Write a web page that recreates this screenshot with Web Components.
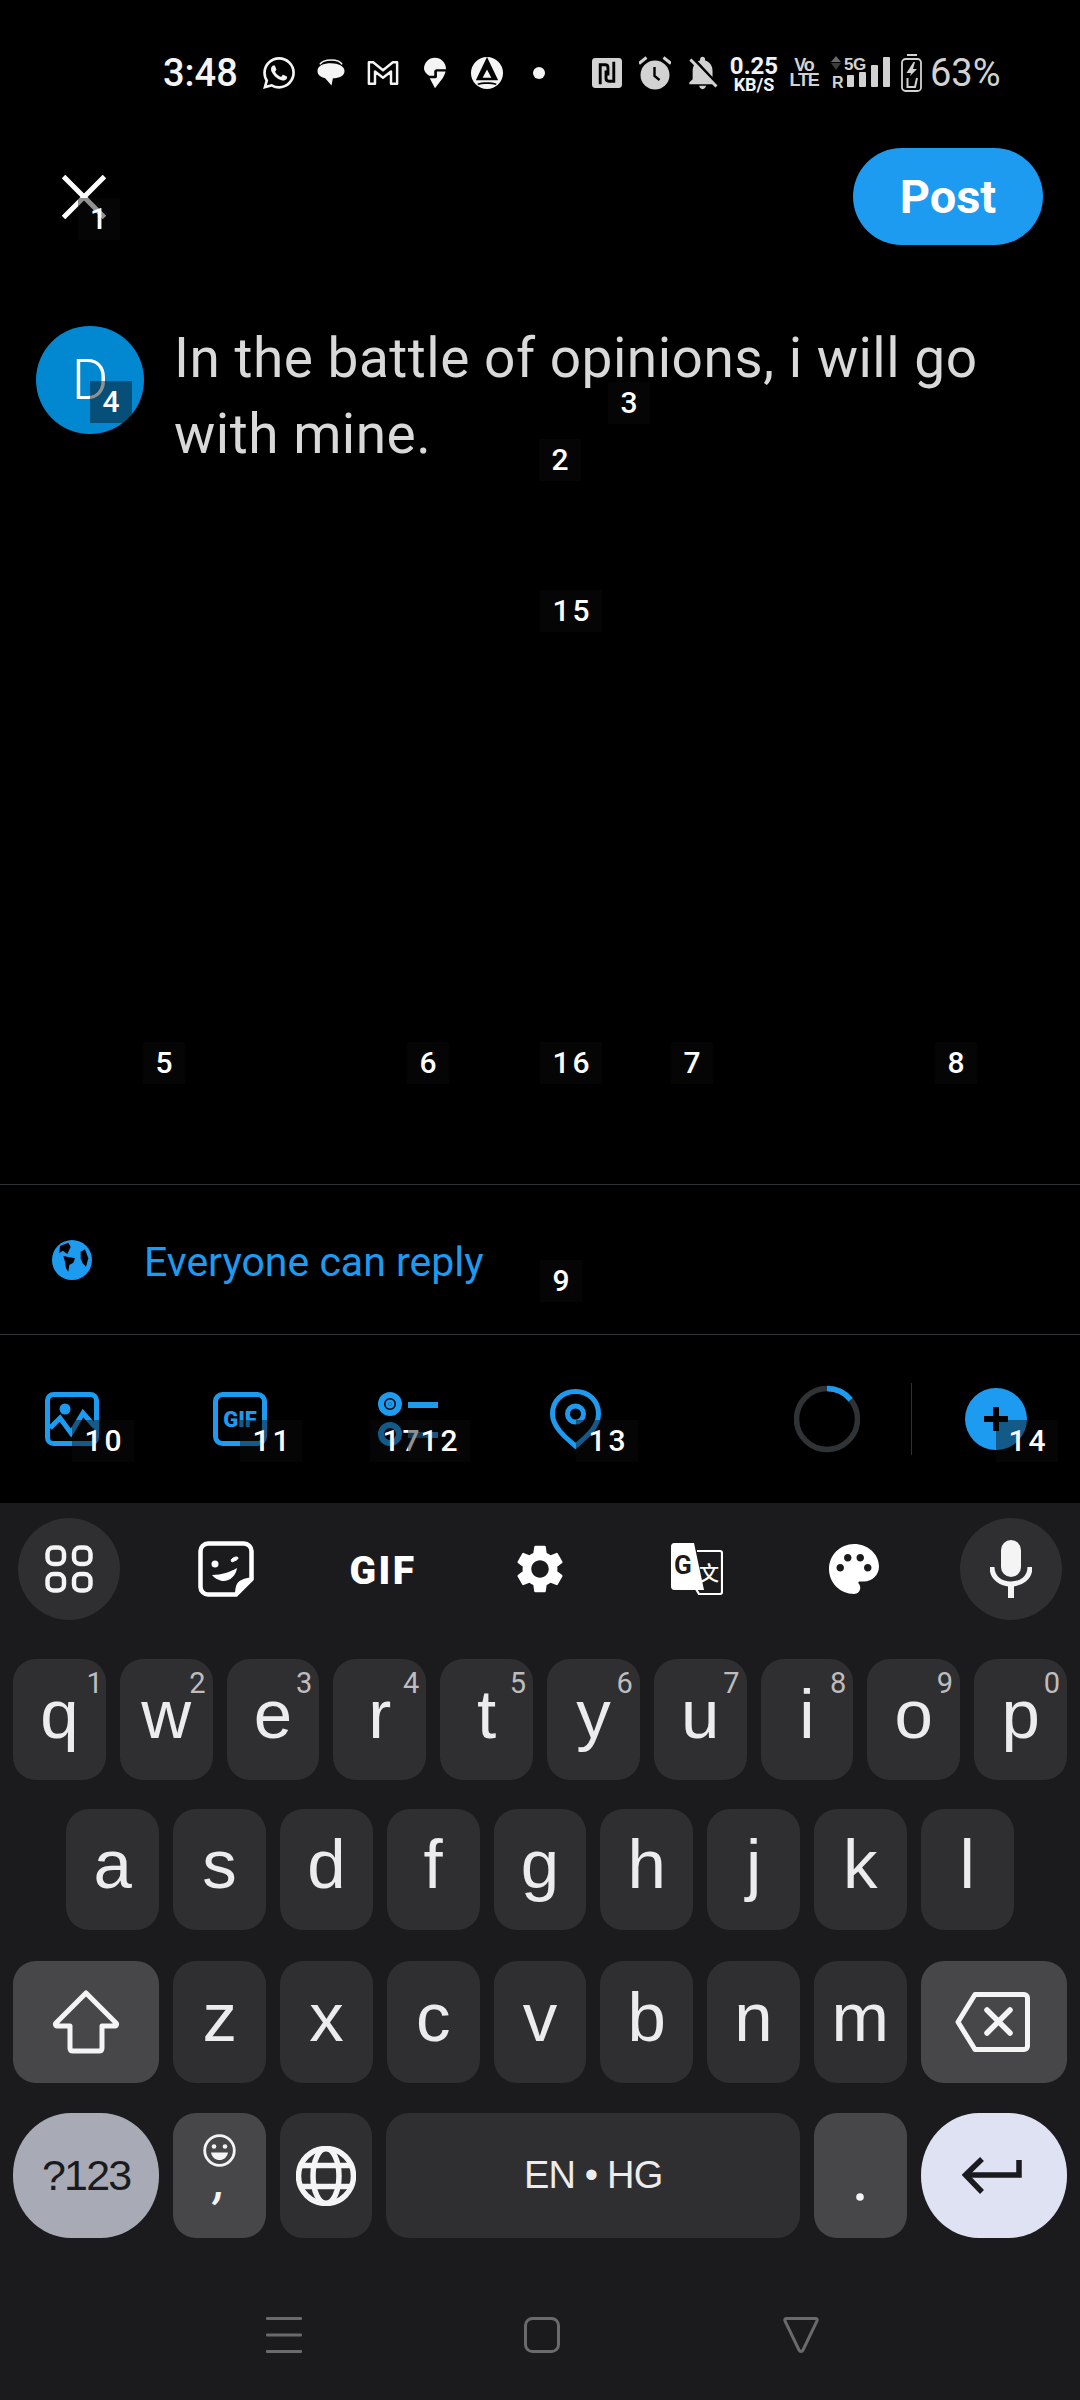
<!DOCTYPE html>
<html lang="en"><head><meta charset="utf-8"><title>Compose</title>
<style>
html,body{margin:0;padding:0;background:#000;}
body{width:1080px;height:2400px;overflow:hidden;font-family:Roboto,"Noto Sans",sans-serif;}
svg{display:block;}
</style></head>
<body>
<x-app>
  <x-status-bar>
    <span style="margin-left:163px;width:74px;font:500 38px Roboto;color:#f4f4f4;white-space:nowrap">3:48</span>
    <svg style="margin-left:26px" width="32" height="32" viewBox="0 0 24 24" fill="#f4f4f4"><path d="M17.472 14.382c-.297-.149-1.758-.867-2.03-.967-.273-.099-.471-.148-.67.15-.197.297-.767.966-.94 1.164-.173.199-.347.223-.644.075-.297-.15-1.255-.463-2.39-1.475-.883-.788-1.48-1.761-1.653-2.059-.173-.297-.018-.458.13-.606.134-.133.298-.347.446-.52.149-.174.198-.298.298-.497.099-.198.05-.371-.025-.52-.075-.149-.669-1.612-.916-2.207-.242-.579-.487-.5-.669-.51-.173-.008-.371-.01-.57-.01-.198 0-.52.074-.792.372-.272.297-1.04 1.016-1.04 2.479 0 1.462 1.065 2.875 1.213 3.074.149.198 2.096 3.2 5.077 4.487.709.306 1.262.489 1.694.625.712.227 1.36.195 1.871.118.571-.085 1.758-.719 2.006-1.413.248-.694.248-1.289.173-1.413-.074-.124-.272-.198-.57-.347m-5.421 7.403h-.004a9.87 9.87 0 01-5.031-1.378l-.361-.214-3.741.982.998-3.648-.235-.374a9.86 9.86 0 01-1.51-5.26c.001-5.45 4.436-9.884 9.888-9.884 2.64 0 5.122 1.03 6.988 2.898a9.825 9.825 0 012.893 6.994c-.003 5.45-4.437 9.884-9.885 9.884m8.413-18.297A11.815 11.815 0 0012.05 0C5.495 0 .16 5.335.157 11.892c0 2.096.547 4.142 1.588 5.945L.057 24l6.305-1.654a11.882 11.882 0 005.683 1.448h.005c6.554 0 11.89-5.335 11.893-11.893a11.821 11.821 0 00-3.48-8.413z"/></svg>
    <svg style="margin-left:22px" width="28" height="28" viewBox="0 0 29 29" fill="#f4f4f4"><path d="M14.500 4.500C7 4.500 .5 7 .5 12.500c0 4 3.500 6.500 8 7.500l6.500 7.500 1.500-7.500c6.500 0 12-2.500 12-7.500S22 4.500 14.500 4.500z"/><path d="M3 5.500C5 2 10 1 15 1s9 1 11 4.500" fill="none" stroke="#f4f4f4" stroke-width="1.600"/></svg>
    <svg style="margin-left:22px" width="32" height="26" viewBox="0 0 34 27"><path d="M2 2h4.500L17 10.500 27.500 2H32v23h-6.500V12L17 18.500 8.500 12v13H2z" fill="none" stroke="#f4f4f4" stroke-width="2.600" stroke-linejoin="round"/></svg>
    <svg style="margin-left:25px" width="22" height="32" viewBox="0 0 23 32" fill="#f4f4f4"><path d="M11.500 0C17.500 0 23 5 23 11.500v.5h-9.500c-1.800 0-2.800 1-2.800 2.500V19H5.500C2.500 17 0 14 0 11.500 0 5 5 0 11.500 0z"/><path d="M6 21.500h6c1 0 1.500-.5 1.500-1.500v-5.500H22.500c-.5 2.500-1.500 4.500-3 7L11.500 32z"/></svg>
    <svg style="margin-left:25px" width="32" height="32" viewBox="0 0 33 33"><circle cx="16.500" cy="16.500" r="16.500" fill="#f4f4f4"/><path d="M16.500 0L5 24h23z" fill="#000"/><path d="M16.500 13l-4.500 8.500h9z" fill="#f4f4f4"/><path d="M6.500 27.500c5-2 15-2 20 0l-1 1.500c-5-1.500-13-1.500-18 0z" fill="#000"/></svg>
    <svg style="margin-left:30px" width="12" height="12" viewBox="0 0 12 12"><circle cx="6" cy="6" r="6" fill="#f4f4f4"/></svg>
    <svg style="margin-left:47px" width="30" height="30" viewBox="0 0 31 31"><rect width="31" height="31" rx="3.500" fill="#d2d2d2"/><path d="M8.500 27V7h5c2 0 3 1 3 3v8M22.500 4v20h-5c-2 0-3-1-3-3v-8" fill="none" stroke="#000" stroke-width="3"/></svg>
    <svg style="margin-left:17px" width="32" height="34" viewBox="0 0 32 34" fill="#d2d2d2"><circle cx="16" cy="19" r="14.500"/><path d="M0 7.500L7.500 1.500M24.500 1.500L32 7.500" stroke="#d2d2d2" stroke-width="3"/><path d="M15.500 11v9l5 4" fill="none" stroke="#000" stroke-width="2.400"/></svg>
    <svg style="margin-left:17px" width="30" height="34" viewBox="3.500 2 17.500 20.500" fill="#d2d2d2"><path d="M20 18.690L7.840 6.140 5.270 3.490 4 4.760l2.800 2.800v.01c-.52.99-.8 2.160-.8 3.420v5l-2 2v1h13.730l2 2L21 19.720l-1-1.030zM12 22c1.110 0 2-.89 2-2h-4c0 1.110.89 2 2 2zm6-7.320V11c0-3.080-1.640-5.640-4.500-6.320V4c0-.83-.67-1.500-1.500-1.500s-1.500.67-1.500 1.500v.68c-.15.03-.29.08-.42.12-.1.03-.2.07-.3.11h-.01c-.2.08-.4.17-.59.27-.01 0-.01 0-.02.01L18 14.680z"/></svg>
    <span style="margin-left:12px;width:48px;display:flex;flex-direction:column;align-items:center;color:#f2f2f2;font:700 24px/21px Roboto;white-space:nowrap;margin-top:1px"><span>0.25</span><span style="font:700 18px/15px Roboto">KB/S</span></span>
    <span style="margin-left:15px;width:22px;display:flex;flex-direction:column;align-items:center;color:#d2d2d2;font:700 18px/15px 'Liberation Sans';letter-spacing:-1.200px;white-space:nowrap"><span>Vo</span><span>LTE</span></span>
    <svg style="margin-left:16px" width="59" height="34" viewBox="0 0 59 34" fill="#d2d2d2"><path d="M5 0L10 6H0z" fill="#6a6a6a"/><path d="M0 7h10L5 14z" fill="#3c3c3c"/><text x="1" y="32" font-family="Liberation Sans" font-weight="700" font-size="16">R</text><text x="13" y="14" font-family="Liberation Sans" font-weight="700" font-size="17" letter-spacing="-.5">5G</text><rect x="16" y="19" width="7" height="12" rx="1"/><rect x="28" y="16" width="7" height="15" rx="1"/><rect x="40" y="9" width="7" height="22" rx="1"/><rect x="52" y="1" width="7" height="30" rx="1"/></svg>
    <svg style="margin-left:11px" width="21" height="38" viewBox="0 0 21 38"><path d="M6 1h10" stroke="#d2d2d2" stroke-width="2"/><rect x="1" y="5" width="19" height="32" rx="3.500" fill="none" stroke="#d2d2d2" stroke-width="1.800"/><path d="M12.500 8L5.500 19h4.500l-1 3 7-7h-4l2-7z" fill="#d2d2d2"/><path d="M6.500 24v9h7.500l2-9" fill="none" stroke="#d2d2d2" stroke-width="2"/></svg>
    <span style="margin-left:8px;font:400 38px Roboto;color:#d2d2d2;white-space:nowrap">63%</span>
  </x-status-bar>

  <x-compose-head>
    <svg slot="close" width="44" height="44" viewBox="0 0 44 44"><path d="M1.500 1.500l41 41M42.500 1.500l-41 41" stroke="#fff" stroke-width="5"/></svg>
    <span slot="post">Post</span>
  </x-compose-head>

  <x-composer initial="D">In the battle of opinions, i will go with mine.</x-composer>

  <x-reply-row>
    <svg slot="icon" width="40" height="42" viewBox="0 0 40 42"><circle cx="20" cy="21" r="20" fill="#1d9bf0"/><path d="M8 7L16.300 3.700 18.700 7.700 15.300 15 10.700 11.700 7.300 14.300z" fill="#000"/><path d="M11.300 17L23 19.300 21.300 23.700 17.300 26 16.300 32.700 14 29.300 13 22.700z" fill="#000"/><path d="M28.700 12.700L33 10.300 36.300 19.300 34 27.700 30.700 24.300 28.700 19.300z" fill="#000"/></svg>
    Everyone can reply
  </x-reply-row>

  <x-action-bar>
    <svg width="54" height="54" viewBox="0 0 54 54" fill="none" stroke="#1d9bf0" stroke-width="5"><rect x="2.500" y="2.500" width="49" height="49" rx="6"/><circle cx="20" cy="17" r="5.500" fill="#1d9bf0" stroke="none"/><path d="M5 36l10-10 11 15 12-20 12 14"/></svg>
    <svg style="margin-left:114px" width="54" height="54" viewBox="0 0 54 54"><rect x="2.500" y="2.500" width="49" height="49" rx="7" fill="none" stroke="#1d9bf0" stroke-width="5"/><text x="27" y="35" text-anchor="middle" font-family="Roboto" font-weight="900" font-size="22" fill="#1d9bf0">GIF</text></svg>
    <svg style="margin-left:111px" width="60" height="54" viewBox="0 0 60 54" fill="none" stroke="#1d9bf0" stroke-width="6"><circle cx="12" cy="12" r="9"/><circle cx="12" cy="12" r="1.500" fill="#1d9bf0"/><circle cx="12" cy="42" r="9"/><path d="M30 13h30M30 43h30"/></svg>
    <svg style="margin-left:112px" width="51" height="60" viewBox="0 0 51 60" fill="none" stroke="#1d9bf0" stroke-width="5"><path d="M25.500 2.500C12 2.500 2.500 12 2.500 25c0 12 11 22 23 32 12-10 23-20 23-32C48.500 12 39 2.500 25.500 2.500z"/><circle cx="25.500" cy="25" r="8"/></svg>
    <svg style="margin-left:auto" width="66" height="68" viewBox="0 0 66 68" fill="none" stroke-width="5.500"><circle cx="33" cy="34" r="30.500" stroke="#2f3336"/><circle cx="33" cy="34" r="30.500" stroke="#1d9bf0" stroke-dasharray="27 200" transform="rotate(-90 33 34)"/></svg>
    <span style="margin-left:51px;width:1px;height:72px;background:#2f3336"></span>
    <svg style="margin-left:53px" width="62" height="62" viewBox="0 0 62 62"><circle cx="31" cy="31" r="31" fill="#1d9bf0"/><path d="M31 19v24M19 31h24" stroke="#000" stroke-width="6"/></svg>
  </x-action-bar>

  <x-keyboard slot="keyboard">
    <x-kb-tools>
      <x-tool round><svg width="48" height="48" viewBox="0 0 48 48" fill="none" stroke="#f4f4f4" stroke-width="4.500"><rect x="2.500" y="2.500" width="16.500" height="16.500" rx="6"/><rect x="29" y="2.500" width="16.500" height="16.500" rx="6"/><rect x="2.500" y="29" width="16.500" height="16.500" rx="6"/><rect x="29" y="29" width="16.500" height="16.500" rx="6"/></svg></x-tool>
      <x-tool><svg width="56" height="56" viewBox="0 0 56 56"><path d="M10 2.500h36c4 0 7.500 3.500 7.500 7.500v28L38 53.500H10c-4 0-7.500-3.500-7.500-7.500V10c0-4 3.500-7.500 7.500-7.500z" fill="none" stroke="#fff" stroke-width="4.500"/><path d="M37 55c0-14 3-17 19-19z" fill="#fff"/><circle cx="17" cy="23" r="3.500" fill="#fff"/><path d="M33 19c2-3 7-4 7-2 0 2-4 3-6 4z" fill="#fff" stroke="#fff"/><path d="M14 34c10 0 18-3 25-7-1 8-8 14-15 13-4-1-8-3-10-6z" fill="#fff"/></svg></x-tool>
      <x-tool><span style="font:900 39px/1 Roboto;letter-spacing:2.500px;color:#fff;margin-top:5px">GIF</span></x-tool>
      <x-tool><svg width="58" height="58" viewBox="0 0 24 24" fill="#fff"><path d="M19.140 12.940c.04-.3.06-.61.06-.94 0-.32-.02-.64-.07-.94l2.030-1.580c.18-.14.23-.41.12-.61l-1.920-3.320c-.12-.22-.37-.29-.59-.22l-2.390.96c-.5-.38-1.030-.7-1.620-.94l-.36-2.540c-.04-.24-.24-.41-.48-.41h-3.840c-.24 0-.43.17-.47.41l-.36 2.540c-.59.24-1.130.57-1.620.94l-2.390-.96c-.22-.08-.47 0-.59.22L2.740 8.870c-.12.21-.08.47.12.61l2.030 1.580c-.05.3-.09.63-.09.94s.02.64.07.94l-2.030 1.580c-.18.14-.23.41-.12.61l1.920 3.320c.12.22.37.29.59.22l2.390-.96c.5.38 1.030.7 1.620.94l.36 2.54c.05.24.24.41.48.41h3.840c.24 0 .44-.17.47-.41l.36-2.540c.59-.24 1.130-.56 1.620-.94l2.390.96c.22.08.47 0 .59-.22l1.920-3.320c.12-.22.07-.47-.12-.61l-2.010-1.580zM12 15.600c-1.980 0-3.600-1.620-3.600-3.600s1.620-3.600 3.600-3.600 3.600 1.620 3.600 3.600-1.620 3.600-3.600 3.600z"/></svg></x-tool>
      <x-tool><svg width="52" height="52" viewBox="0 0 52 52"><path d="M3 0h20l10 47H3c-1.500 0-3-1.500-3-3V3C0 1.500 1.500 0 3 0z" fill="#fff"/><path d="M26 8h23c1 0 2 1 2 2v39c0 1-1 2-2 2H28l-3-5" fill="none" stroke="#fff" stroke-width="2.200"/><text x="3" y="31" font-family="Roboto" font-weight="700" font-size="26" fill="#1b1b1d">G</text><text x="28" y="38" font-family="Noto Sans CJK SC" font-weight="500" font-size="20" fill="#fff">文</text></svg></x-tool>
      <x-tool><svg width="60" height="60" viewBox="0 0 24 24" fill="#fff"><path d="M12 2C6.490 2 2 6.490 2 12s4.490 10 10 10c1.380 0 2.500-1.120 2.500-2.500 0-.61-.23-1.200-.64-1.670-.08-.1-.13-.21-.13-.33 0-.28.22-.5.5-.5H16c3.310 0 6-2.690 6-6 0-4.960-4.490-9-10-9zm-5.500 11c-.83 0-1.500-.67-1.500-1.500S5.670 10 6.500 10s1.500.67 1.500 1.500S7.330 13 6.500 13zm3-4C8.670 9 8 8.330 8 7.500S8.670 6 9.500 6s1.500.67 1.500 1.500S10.330 9 9.500 9zm5 0c-.83 0-1.500-.67-1.500-1.500S13.670 6 14.500 6s1.500.67 1.500 1.500S15.330 9 14.500 9zm3 4c-.83 0-1.500-.67-1.500-1.500s.67-1.500 1.500-1.500 1.500.67 1.500 1.500-.67 1.500-1.500 1.500z"/></svg></x-tool>
      <x-tool round><svg width="42" height="58" viewBox="0 0 42 58"><rect x="11" y="0" width="20" height="37" rx="10" fill="#f4f4f4"/><path d="M2 27c0 11 9 17 19 17s19-6 19-17" fill="none" stroke="#f4f4f4" stroke-width="5"/><path d="M21 44v14" stroke="#f4f4f4" stroke-width="6"/></svg></x-tool>
    </x-kb-tools>

    <x-kb-row style="--h:121px;--mt:39px">
      <x-key hint="1" style="--hr:3px">q</x-key><x-key hint="2">w</x-key><x-key hint="3">e</x-key><x-key hint="4">r</x-key><x-key hint="5">t</x-key><x-key hint="6">y</x-key><x-key hint="7">u</x-key><x-key hint="8">i</x-key><x-key hint="9">o</x-key><x-key hint="0">p</x-key>
    </x-kb-row>
    <x-kb-row style="--h:121px;--mt:29px;--pad:66.4px">
      <x-key>a</x-key><x-key>s</x-key><x-key>d</x-key><x-key>f</x-key><x-key>g</x-key><x-key>h</x-key><x-key>j</x-key><x-key>k</x-key><x-key>l</x-key>
    </x-kb-row>
    <x-kb-row style="--h:122px;--mt:31px">
      <x-key kind="fn" wide><svg width="66" height="64" viewBox="0 0 66 64"><path d="M33 3L3 33c-1 1-.5 3 1 3h13v22c0 2 1 3 3 3h26c2 0 3-1 3-3V36h13c1.500 0 2-2 1-3z" fill="none" stroke="#f4f4f4" stroke-width="5" stroke-linejoin="round"/></svg></x-key>
      <x-key>z</x-key><x-key>x</x-key><x-key>c</x-key><x-key>v</x-key><x-key>b</x-key><x-key>n</x-key><x-key>m</x-key>
      <x-key kind="fn" wide><svg style="margin-right:3px" width="75" height="60" viewBox="0 0 75 60"><path d="M20 2.500h49c2 0 3.500 1.500 3.500 3.500v48c0 2-1.500 3.500-3.500 3.500H20L3 30z" fill="none" stroke="#f4f4f4" stroke-width="5" stroke-linejoin="round"/><path d="M32 18l23 23M55 18L32 41" stroke="#f4f4f4" stroke-width="5.500" stroke-linecap="round"/></svg></x-key>
    </x-kb-row>
    <x-kb-row style="--h:125px;--mt:30px">
      <x-key kind="sym" wide small style="letter-spacing:-1.800px;font-size:43px">?123</x-key>
      <x-key kind="fn" small icon><span style="display:flex;flex-direction:column;align-items:center;align-self:flex-start;padding-top:21px"><svg width="33" height="33" viewBox="0 0 33 33"><circle cx="16.500" cy="16.500" r="14.800" fill="none" stroke="#f4f4f4" stroke-width="2.800"/><circle cx="11" cy="12.500" r="2.300" fill="#f4f4f4"/><circle cx="22" cy="12.500" r="2.300" fill="#f4f4f4"/><path d="M8 18.500h17c-1 5-4.500 7.500-8.500 7.500s-7.500-2.500-8.500-7.500z" fill="#f4f4f4"/></svg><span style="font:italic 500 48px/34px Roboto;color:#f4f4f4;margin-top:-3px;height:34px">,</span></span></x-key>
      <x-key><svg width="60" height="60" viewBox="0 0 60 60" fill="none" stroke="#f4f4f4" stroke-width="5.500"><circle cx="30" cy="30" r="27.500"/><ellipse cx="30" cy="30" rx="13" ry="27.500"/><path d="M5 19.500h50M5 40.500h50"/></svg></x-key>
      <x-key flex small style="letter-spacing:-.8px">EN • HG</x-key>
      <x-key kind="fn"><svg style="margin-top:42px" width="8" height="8" viewBox="0 0 8 8"><circle cx="4" cy="4" r="3.800" fill="#f4f4f4"/></svg></x-key>
      <x-key kind="enter" wide><svg style="margin-right:4px" width="60" height="38" viewBox="0 0 60 38" fill="none" stroke="#1b1b1d" stroke-width="5.500"><path d="M57 3v15H5"/><path d="M20 2L3.500 18 20 35"/></svg></x-key>
    </x-kb-row>

    <x-nav-bar>
      <svg width="36" height="36" viewBox="0 0 36 36" fill="#6a6a6c"><rect y="0" width="36" height="3" rx="1"/><rect y="16.500" width="36" height="3" rx="1"/><rect y="33" width="36" height="3" rx="1"/></svg>
      <svg style="margin-left:222px" width="36" height="36" viewBox="0 0 36 36"><rect x="1.500" y="1.500" width="33" height="33" rx="7" fill="none" stroke="#6a6a6c" stroke-width="3"/></svg>
      <svg style="margin-left:223px" width="36" height="36" viewBox="0 0 36 36"><path d="M3.500 1.500h29c1.500 0 2 1 1.500 2.500L20 33c-1 2-3 2-4 0L2 4c-.5-1.500 0-2.500 1.500-2.500z" fill="none" stroke="#6a6a6c" stroke-width="3"/></svg>
    </x-nav-bar>
  </x-keyboard>

  <x-tag slot="tags" x="77.500" y="198">1</x-tag>
  <x-tag slot="tags" x="90" y="381">4</x-tag>
  <x-tag slot="tags" x="608" y="382">3</x-tag>
  <x-tag slot="tags" x="539" y="439">2</x-tag>
  <x-tag slot="tags" x="540" y="590" w="62">15</x-tag>
  <x-tag slot="tags" x="143" y="1042">5</x-tag>
  <x-tag slot="tags" x="407" y="1042">6</x-tag>
  <x-tag slot="tags" x="540" y="1042" w="62">16</x-tag>
  <x-tag slot="tags" x="671" y="1042">7</x-tag>
  <x-tag slot="tags" x="935" y="1042">8</x-tag>
  <x-tag slot="tags" x="540" y="1260">9</x-tag>
  <x-tag slot="tags" x="72" y="1420" w="62">10</x-tag>
  <x-tag slot="tags" x="240" y="1420" w="62">11</x-tag>
  <x-tag slot="tags" x="370" y="1420" w="62">17</x-tag>
  <x-tag slot="tags" x="408" y="1420" w="62">12</x-tag>
  <x-tag slot="tags" x="576" y="1420" w="62">13</x-tag>
  <x-tag slot="tags" x="996" y="1420" w="62">14</x-tag>
</x-app>

<script>
function def(name, css, html, extra){
  const tpl=document.createElement('template');
  tpl.innerHTML='<style>'+css+'</style>'+html;
  customElements.define(name, class extends HTMLElement{
    constructor(){super();this.attachShadow({mode:'open'}).appendChild(tpl.content.cloneNode(true));}
    connectedCallback(){ if(extra) extra(this,this.shadowRoot); }
  });
}
def('x-app',
 ':host{display:block;position:relative;width:1080px;height:2400px;background:#000;overflow:hidden}'+
 '.col{display:flex;flex-direction:column;height:100%}.grow{flex:1 1 auto;min-height:0;display:flex;flex-direction:column}',
 '<div class="col"><div class="grow"><slot></slot></div><slot name="keyboard"></slot></div><slot name="tags"></slot>');
def('x-status-bar',':host{display:flex;align-items:center;height:146px;flex:none}','<slot></slot>');
def('x-compose-head',
 ':host{display:flex;align-items:center;justify-content:space-between;height:97px;margin-top:2px;padding:0 37px 0 62px;flex:none}'+
 '.post{display:flex;align-items:center;justify-content:center;width:190px;height:97px;border-radius:49px;background:#1d9bf0;color:#fff;font:700 47px Roboto}',
 '<slot name="close"></slot><div class="post"><slot name="post"></slot></div>');
def('x-composer',
 ':host{display:flex;align-items:flex-start;padding:74px 90px 0 36px;gap:30px;flex:none}'+
 '.av{flex:none;width:108px;height:108px;margin-top:7px;border-radius:50%;background:#0288d1;color:#fff;display:flex;align-items:center;justify-content:center;font:300 56px Roboto}'+
 '.tx{font:400 55px/76px Roboto;letter-spacing:.5px;color:#d9d9d9;flex:1;padding-top:1px}',
 '<div class="av"></div><div class="tx"><slot></slot></div>',
 (h,s)=>{s.querySelector('.av').textContent=h.getAttribute('initial');});
def('x-reply-row',
 ':host{display:flex;align-items:center;margin-top:auto;height:149px;border-top:1px solid #2f3336;padding-left:52px;gap:52px;color:#1d9bf0;font:400 41px Roboto;flex:none}'+
 'span{padding-top:4px}',
 '<slot name="icon"></slot><span><slot></slot></span>');
def('x-action-bar',
 ':host{display:flex;align-items:center;height:168px;border-top:1px solid #2f3336;padding:0 53px 0 45px;flex:none}','<slot></slot>');
def('x-keyboard',
 ':host{display:block;height:897px;padding-top:15px;box-sizing:border-box;background:#1b1b1d;flex:none}','<slot></slot>');
def('x-kb-tools',':host{display:flex;justify-content:space-between;padding:0 18px;height:102px}','<slot></slot>');
def('x-tool',
 ':host{display:flex;align-items:center;justify-content:center;width:102px;height:102px;border-radius:50%}:host([round]){background:#2f2f31}','<slot></slot>');
def('x-kb-row',
 ':host{display:flex;gap:14px;height:var(--h);margin-top:var(--mt);padding:0 var(--pad,13px)}','<slot></slot>');
def('x-key',
 ':host{position:relative;box-sizing:border-box;flex:1 1 0;min-width:0;display:flex;align-items:center;justify-content:center;background:#2f2f31;border-radius:23px;color:#ececee;font:400 69px "Liberation Sans",Arial,sans-serif}'+
 ':host(:not([icon]):not([small])){padding-bottom:10px}'+
 ':host([wide]){flex:0 0 146.4px}:host([flex]){flex:0 0 414px}:host([small]){font-size:38px}'+
 ':host([kind=fn]){background:#47474a}'+
 ':host([kind=sym]){background:#a8abb6;color:#1b1b1d;border-radius:58px/62px}'+
 ':host([kind=enter]){background:#dfe2f2;border-radius:58px/62px}'+
 '.h{position:absolute;top:7px;right:var(--hr,7px);font:400 29px Roboto;color:#bdbdbf}',
 '<slot></slot><span class="h"></span>',
 (h,s)=>{const v=h.getAttribute('hint');const e=s.querySelector('.h');if(v)e.textContent=v;else e.remove();if(h.querySelector('svg'))h.setAttribute('icon','');});
def('x-nav-bar',':host{display:flex;align-items:flex-start;margin-top:79px;padding-left:266px}','<slot></slot>');
def('x-tag',
 ':host{position:absolute;box-sizing:border-box;padding-left:3px;height:42px;display:flex;align-items:center;justify-content:center;background:rgba(12,12,12,.45);color:#fff;font:500 30px/42px Roboto;letter-spacing:3px}',
 '<slot></slot>',
 (h)=>{h.style.left=h.getAttribute('x')+'px';h.style.top=h.getAttribute('y')+'px';h.style.width=(h.getAttribute('w')||42)+'px';});
</script>
</body></html>
